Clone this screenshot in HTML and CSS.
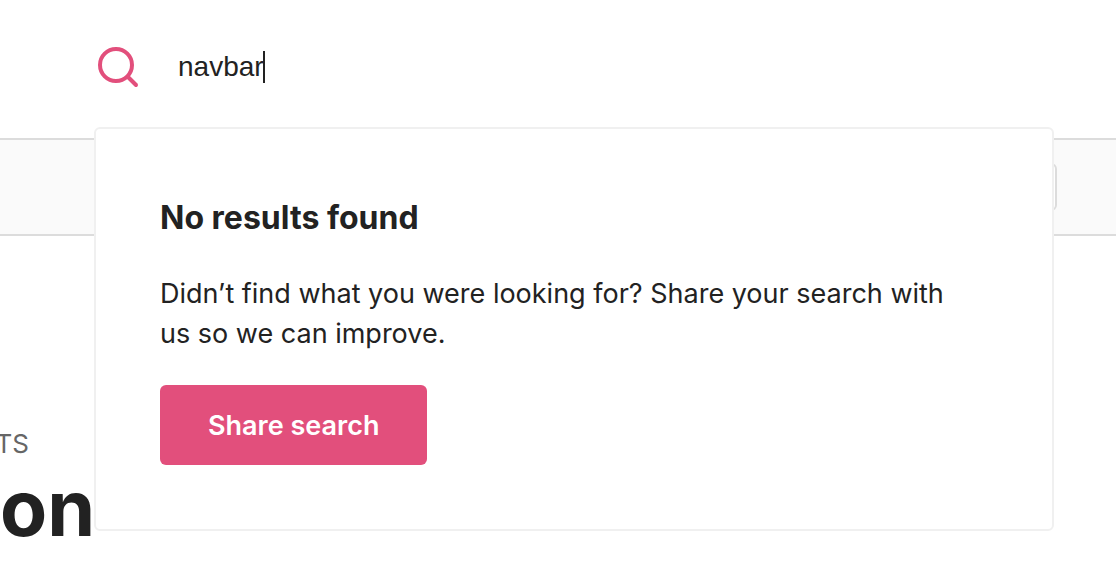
FILE: index.html
```html
<!DOCTYPE html>
<html lang="en">
<head>
<meta charset="utf-8">
<title>Search</title>
<link rel="stylesheet" href="styles.css">
</head>
<body>
<header class="header">
  <form class="search" role="search">
    <label class="search-label" for="query" aria-label="Search">
      <svg class="search-icon" viewBox="0 0 42 42" fill="none" stroke="currentColor" stroke-width="4" stroke-linecap="round" aria-hidden="true">
        <circle cx="19" cy="19" r="16"/>
        <path d="M31 31L39 39"/>
      </svg>
    </label>
    <div class="field">
      <input class="query" id="query" type="text" value="navbar" autocomplete="off" spellcheck="false">
      <span class="caret"></span>
    </div>
    <section class="results">
      <h2 class="results-title">No results found</h2>
      <p class="results-text">Didn’t find what you were looking for? Share your search with us so we can improve.</p>
      <button class="share" type="button">Share search</button>
    </section>
  </form>
</header>
<div class="toolbar"><div class="toolbar-box"></div></div>
<main class="content">
  <p class="eyebrow">TS</p>
  <h1 class="title">on</h1>
</main>
</body>
</html>
```
FILE: styles.css
```css
* { box-sizing: border-box; }
body {
  margin: 0;
  overflow: hidden;
  background: #fff;
  color: #222;
  font-family: Inter, "Liberation Sans", sans-serif;
}
.header {
  height: 138px;
  padding: 0 62px 0 94px;
}
.search {
  position: relative;
  display: flex;
  align-items: center;
  height: 134px;
}
.search-label {
  display: flex;
  padding: 0 39px 0 3px;
  color: #e24f7c;
}
.search-icon {
  width: 42px;
  height: 42px;
}
.field {
  display: flex;
  align-items: center;
}
.query {
  field-sizing: content;
  padding: 0;
  border: 0;
  outline: 0;
  background: transparent;
  color: #222;
  caret-color: transparent;
  font: 28px/32px "Liberation Sans", Arial, sans-serif;
}
.caret {
  width: 2px;
  height: 32px;
  margin-left: -1px;
  background: #222;
}
.results {
  position: absolute;
  z-index: 1;
  top: 127px;
  left: 0;
  right: 0;
  padding: 64px;
  border: 2px solid #f0f0f0;
  border-radius: 6px;
  background: #fff;
}
.results-title {
  margin: 0 0 31px;
  font-size: 32px;
  line-height: 50px;
  font-weight: 700;
}
.results-text {
  margin: 0 0 31px;
  padding-right: 32px;
  font-size: 27px;
  line-height: 40px;
}
.share {
  display: block;
  height: 80px;
  padding: 2px 48px 0;
  border: 0;
  border-radius: 6px;
  background: #e24f7c;
  color: #fff;
  font: 600 27px/40px Inter, "Liberation Sans", sans-serif;
}
.toolbar {
  display: flex;
  justify-content: flex-end;
  align-items: center;
  height: 98px;
  padding-right: 59px;
  border: solid #dcdcdc;
  border-width: 2px 0;
  background: #fafafa;
}
.toolbar-box {
  width: 120px;
  height: 48px;
  border: 2px solid #dcdcdc;
  border-radius: 6px;
  background: #fff;
}
.content {
  padding-top: 188px;
}
.eyebrow {
  display: flex;
  justify-content: flex-end;
  width: 29px;
  margin: 0;
  color: #666;
  font-size: 26px;
  line-height: 40px;
}
.title {
  margin: 0;
  font-size: 77px;
  line-height: 88px;
  font-weight: 700;
}
```
